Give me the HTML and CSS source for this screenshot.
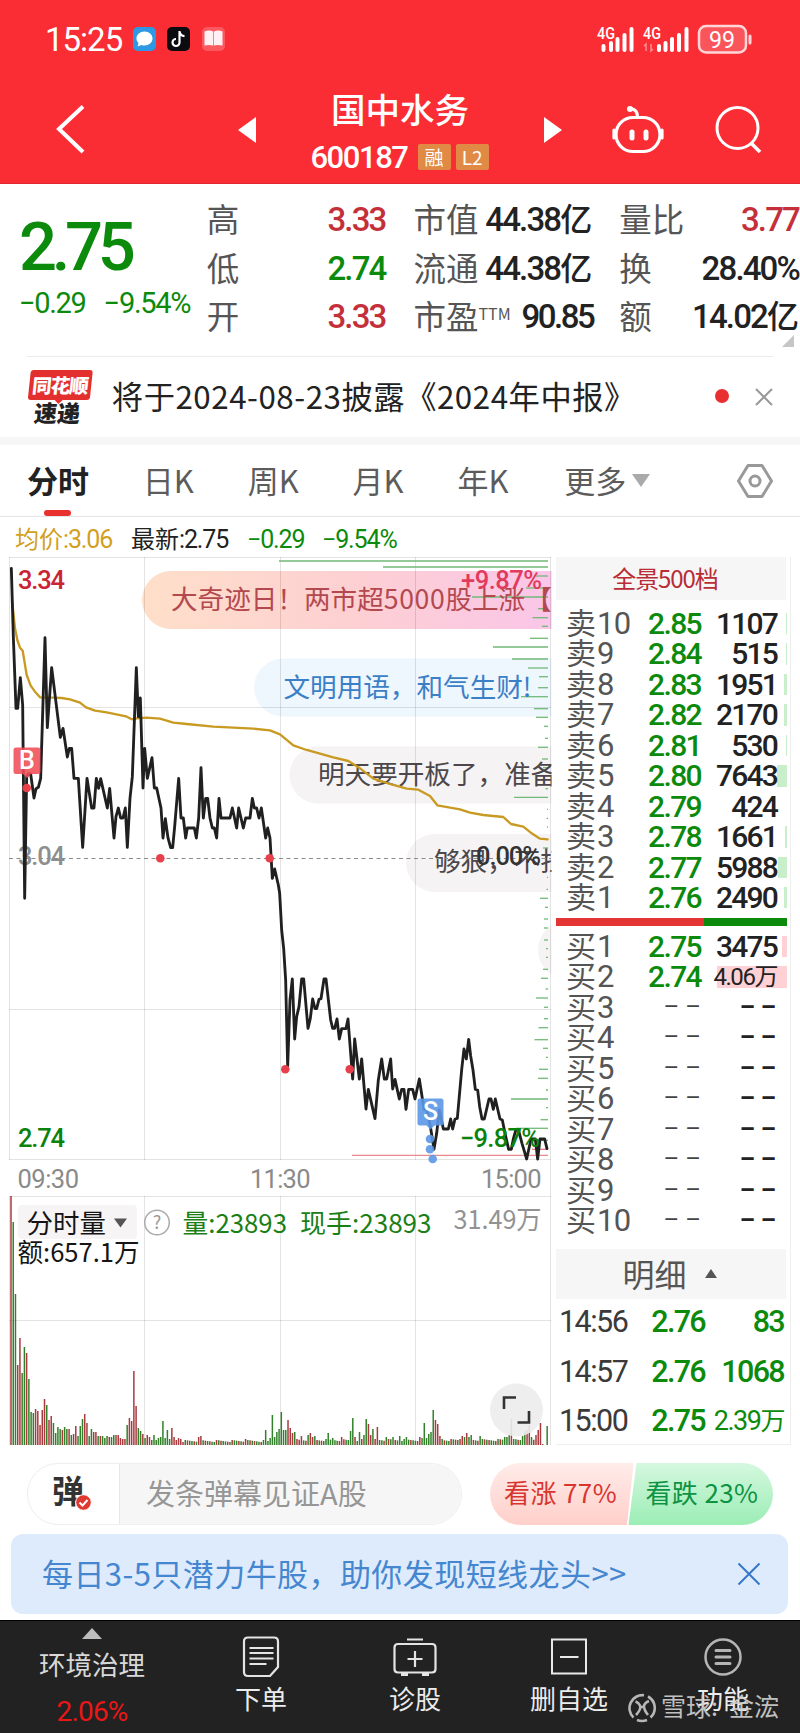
FILE: index.html
```html
<!DOCTYPE html>
<html lang="zh-CN">
<head>
<meta charset="utf-8">
<title>国中水务 600187</title>
<link rel="stylesheet" href="styles.css">
</head>
<body>
<header class="top">
  <div class="status">
    <span class="clock num">15:25</span>
    <svg class="apps" width="94" height="26" viewBox="0 0 94 26">
      <rect x="0" y="1" width="23" height="24" rx="5" fill="#2f98e4"/>
      <path d="M11.500 5.500c4.500 0 8 3 8 7s-3.500 7-8 7c-1 0-2-.1-3-.5L4.500 20.500l1-3.500C4 15.500 3.500 14 3.500 12.500c0-4 3.500-7 8-7z" fill="#fff"/>
      <rect x="34" y="1" width="23" height="24" rx="5" fill="#0b0b10"/>
      <path d="M46.500 5v11.500a3.500 3.500 0 1 1-3.500-3.500M46.500 5.500c.5 3 2.500 4.500 5 4.700" fill="none" stroke="#fff" stroke-width="2.200"/>
      <rect x="69" y="1" width="23" height="24" rx="5" fill="#fb5860"/>
      <path d="M71.500 5.500q4.500-2 8.800 0v14q-4.500-1-8.800 0zM81 5.500q4-2 8.500 0v14q-4.500-1-8.500 0z" fill="#fff0f4"/>
    </svg>
    <svg class="signal" width="158" height="30" viewBox="596 23 158 30">
      <g class="net"><text x="597" y="37.500" textLength="18" lengthAdjust="spacingAndGlyphs">4G</text><text x="643" y="37.500" textLength="18" lengthAdjust="spacingAndGlyphs">4G</text></g>
      <path d="M603.500 45v4M611 42v7M617.500 38v11M624.500 34v15M631.500 28v21M659 45v4M665.500 42v7M672 38v11M679 34v15M686.500 28v21" stroke="#fff" stroke-width="4" stroke-linecap="round"/>
      <path d="M646 50v-7l-2 2M651 43v7l2-2" stroke="#ff8d91" stroke-width="1.500" fill="none"/>
      <rect x="699" y="25" width="47" height="26.500" rx="7" fill="#fb555c" stroke="#ffd6d8" stroke-width="2.500"/>
      <path d="M750 35v7" stroke="#ffd6d8" stroke-width="3" stroke-linecap="round"/>
      <text x="709" y="46.500" class="bat" textLength="26" lengthAdjust="spacingAndGlyphs">99</text>
    </svg>
  </div>
  <div class="titlebar">
    <svg class="back" width="30" height="50" viewBox="0 0 30 50"><path d="M27 2.500L3 25l24 23" fill="none" stroke="#fff" stroke-width="4"/></svg>
    <svg class="prev" width="18" height="26" viewBox="0 0 18 26"><path d="M18 0v26L0 13z" fill="#fff"/></svg>
    <div class="name">
      <h1>国中水务</h1>
      <div class="code"><span class="num">600187</span><b>融</b><b class="l2">L2</b></div>
    </div>
    <svg class="next" width="18" height="26" viewBox="0 0 18 26"><path d="M0 0v26l18-13z" fill="#fff"/></svg>
    <svg class="robot" width="54" height="50" viewBox="0 0 54 50"><g fill="none" stroke="#fff" stroke-width="3.200" stroke-linecap="round"><rect x="5" y="12.500" width="44" height="34" rx="17"/><path d="M3 25v8M51 25v8M26.500 12c0-5-2-8-7-8.500"/><path d="M21 27v6M35 27v6" stroke-width="5"/></g><circle cx="19" cy="4" r="3" fill="#fff"/></svg>
    <svg class="search" width="48" height="48" viewBox="0 0 48 48"><circle cx="22.500" cy="23" r="20.500" fill="none" stroke="#fff" stroke-width="3"/><path d="M36 38l9 9" stroke="#fff" stroke-width="3.500"/></svg>
  </div>
</header>

<section class="quote">
  <div class="last green">
    <div class="price num">2.75</div>
    <div class="chg num"><span>−0.29</span><span>−9.54%</span></div>
  </div>
  <dl class="c1"><dt>高</dt><dd class="red">3.33</dd><dt>低</dt><dd class="green">2.74</dd><dt>开</dt><dd class="red">3.33</dd></dl>
  <dl class="c2"><dt>市值</dt><dd>44.38<i>亿</i></dd><dt>流通</dt><dd>44.38<i>亿</i></dd><dt>市盈<sup>TTM</sup></dt><dd class="pe">90.85</dd></dl>
  <dl class="c3"><dt>量比</dt><dd class="red">3.77</dd><dt>换</dt><dd>28.40%</dd><dt>额</dt><dd>14.02<i>亿</i></dd></dl>
  <span class="corner"></span>
</section>

<section class="news">
  <div class="express"><span class="brand">同花顺</span><span class="sub">速递</span></div>
  <p>将于2024-08-23披露《2024年中报》</p>
  <span class="dot"></span>
  <svg width="18" height="18" viewBox="0 0 18 18"><path d="M1 1l16 16M17 1L1 17" stroke="#999" stroke-width="2"/></svg>
</section>

<nav class="tabs">
  <span class="on">分时</span><span>日K</span><span>周K</span><span>月K</span><span>年K</span><span class="more">更多<i></i></span>
  <svg width="36" height="34" viewBox="0 0 36 34"><path d="M11 1.500h14L34.500 17 25 32.500H11L1.500 17z" fill="none" stroke="#999" stroke-width="3" stroke-linejoin="round"/><circle cx="18" cy="17" r="5" fill="none" stroke="#999" stroke-width="3"/></svg>
</nav>

<div class="legend">
  <span class="avg">均价<em>:3.06</em></span><span class="now">最新<em>:2.75</em></span><span class="green d1"><em>−0.29</em></span><span class="green"><em>−9.54%</em></span>
</div>

<main class="board">
  <svg class="chart" width="556" height="888" viewBox="0 557 556 888">
    <defs>
      <linearGradient id="warm"><stop offset="0" stop-color="#ffdfc9"/><stop offset=".45" stop-color="#fdd0d2"/><stop offset="1" stop-color="#fac3ee"/></linearGradient>
      <clipPath id="frame"><rect x="9" y="557" width="542.500" height="603"/></clipPath>
    </defs>
    <g clip-path="url(#frame)">
      <rect x="142" y="571" width="460" height="58" rx="29" fill="url(#warm)"/>
      <rect x="254" y="658.500" width="340" height="58" rx="29" fill="#eef6fe"/>
      <rect x="289.500" y="746.500" width="400" height="57" rx="28.500" fill="#f6f3f5"/>
      <rect x="406" y="834" width="400" height="58" rx="29" fill="#f6f3f5"/>
      <rect x="538" y="921" width="400" height="58" rx="29" fill="#f6f3f5"/>
    </g>
    <path d="M9.500 557v603M144.500 557v603M280.500 557v603M415.500 557v603M550.500 557v888M9 557.500h542M9 707.500h542M9 1009.500h542M9 1159.500h542M9 1196.500h542M9.500 1196v249M144.500 1196v249M280.500 1196v249M415.500 1196v249M9 1320.500h542" stroke="#000" stroke-opacity=".11" fill="none"/>
    <g id="depth" stroke-width="1.300"></g>
    <g clip-path="url(#frame)" class="danmu">
      <text x="171" y="609" fill="#b3494f">大奇迹日！两市超<tspan textLength="61">5000</tspan>股上涨【</text>
      <text x="283.500" y="697" fill="#3b7fc6">文明用语，和气生财!</text>
      <text x="318" y="784" fill="#4b474a">明天要开板了，准备</text>
      <text x="434" y="871" fill="#4b474a">够狠，不扛</text>
    </g>
    <path d="M9 858.500h542" stroke="#8b8b8b" stroke-width="1.200" stroke-dasharray="4 3.500"/>
    <g class="axis">
      <text x="18" y="588.500" textLength="47" fill="#cb2434">3.34</text>
      <text x="461" y="588.500" textLength="81" fill="#e23a5c">+9.87%</text>
      <text x="18" y="865" textLength="47" fill="#8e8e8e">3.04</text>
      <text x="476" y="865" textLength="65" fill="#333">0.00%</text>
    </g>
    <g transform="translate(0 550) scale(.33333)" fill="none" stroke-linejoin="round" stroke-linecap="round">
      <path stroke="#c99a22" stroke-width="7" d="M36 150L45 235 52 270 60 293 68 302 80 375 92 407 105 425 120 442 160 443 185 444 210 448 240 458 258 472 285 482 320 487 378 499 395 508 410 505 440 503 480 506 520 518 560 522 640 530 700 533 760 536 810 541 840 553 880 586 920 600 960 611 1000 622 1045 633 1080 655 1120 686 1180 705 1220 716 1255 719 1290 738 1312 766 1380 778 1410 788 1450 795 1510 801 1533 822 1570 830 1595 850 1620 866 1643 868"/>
      <path stroke="#202020" stroke-width="8.500" d="M34 55L40 260 48 475 53 475 61 383 68 465 74 1045 80 680 85 672 92 672 102 744 108 716 115 712 122 685 135 263 142 533 155 353 181 562 189 535 202 621 208 595 215 595 222 685 235 685 248 892 261 685 275 774 282 774 289 685 296 715 302 686 322 774 329 715 342 864 348 800 355 774 362 804 369 804 376 774 382 892 390 745 397 680 409 353 415 500 421 444 429 714 434 595 442 685 456 623 463 714 470 714 483 774 489 864 496 806 504 864 512 893 518 893 524 830 536 685 543 804 550 804 557 864 562 834 583 834 589 864 596 804 603 653 610 804 617 745 623 745 630 804 637 834 643 834 650 864 657 745 663 804 690 804 697 774 710 834 716 774 730 834 737 804 750 804 757 745 763 774 770 774 777 804 784 774 797 864 803 834 810 864 817 985 824 957 835 1005 839 1030 845 1140 851 1195 857 1290 863 1550 870 1350 877 1287 884 1467 890 1400 897 1370 905 1287 911 1287 924 1435 931 1405 938 1347 945 1376 950 1376 957 1348 963 1346 972 1287 978 1287 992 1410 998 1435 1004 1435 1011 1407 1018 1467 1025 1436 1038 1436 1044 1407 1058 1587 1064 1467 1078 1587 1085 1527 1098 1677 1105 1618 1125 1706 1135 1590 1145 1527 1153 1587 1160 1587 1172 1527 1178 1617 1185 1588 1198 1647 1205 1618 1212 1618 1218 1678 1226 1618 1238 1618 1245 1647 1258 1587 1272 1678 1280 1678 1292 1735 1302 1798 1310 1750 1318 1680 1330 1737 1345 1737 1352 1707 1358 1737 1365 1707 1372 1705 1385 1560 1392 1497 1399 1527 1406 1468 1412 1518 1419 1560 1426 1618 1433 1620 1439 1670 1446 1707 1453 1707 1467 1647 1473 1647 1480 1678 1486 1647 1500 1707 1507 1710 1515 1750 1526 1798 1534 1798 1540 1767 1548 1738 1555 1738 1566 1780 1580 1827 1593 1767 1606 1767 1613 1827 1620 1767 1634 1767 1641 1796"/>
    </g>
    <g fill="#e8404a"><circle cx="26.700" cy="788" r="4.300"/><circle cx="160.300" cy="858.300" r="4.300"/><circle cx="269.700" cy="858.300" r="4.300"/><circle cx="285.300" cy="1069.300" r="4.300"/><circle cx="349.700" cy="1069.300" r="4.300"/></g>
    <path fill="#f04d58" fill-opacity=".88" d="M16 747.500h22q2.500 0 2.500 2.500v21.500q0 2.500-2.500 2.500h-7l-4 4-4-4h-7q-2.500 0-2.500-2.500V750q0-2.500 2.500-2.500z"/>
    <g fill="#5a97e6" fill-opacity=".9"><path d="M420 1098.500h21q2.500 0 2.500 2.500v22q0 2.500-2.500 2.500h-6.500l-4 4-4-4H420q-2.500 0-2.500-2.500v-22q0-2.500 2.500-2.500z"/><circle cx="430" cy="1139" r="4.300"/><circle cx="430" cy="1149.300" r="4.300"/><circle cx="432.700" cy="1159" r="4.300"/></g>
    <g class="mark"><text x="27" y="768.500">B</text><text x="430.500" y="1119.500">S</text></g>
    <g class="axis">
      <text x="18" y="1147" textLength="47" fill="#0b820b">2.74</text>
      <text x="460" y="1147" textLength="80" fill="#0b820b">−9.87%</text>
      <g class="thin" fill="#8a8a8a"><text x="17.500" y="1188" textLength="61.500">09:30</text><text x="250" y="1188" textLength="60.500">11:30</text><text x="481" y="1188" textLength="60.500">15:00</text></g>
    </g>
    <g id="volume" stroke-width="1.500"></g>
    <rect x="18" y="1205" width="119" height="34" rx="4" fill="#f6f4f5"/>
    <path d="M114 1218.500h13l-6.500 9z" fill="#555"/>
    <circle cx="157" cy="1222.500" r="12.300" fill="none" stroke="#aaa" stroke-width="1.500"/>
    <g class="vol">
      <text x="26.500" y="1232.500" fill="#151515" textLength="79.500" lengthAdjust="spacingAndGlyphs">分时量</text>
      <text x="157" y="1229" class="q" fill="#999">?</text>
      <text x="182.500" y="1232.500" fill="#1a8015" textLength="104.500" lengthAdjust="spacingAndGlyphs">量:23893</text>
      <text x="300" y="1232.500" fill="#1a8015" textLength="131.500" lengthAdjust="spacingAndGlyphs">现手:23893</text>
      <text x="453.500" y="1228.500" fill="#929292" textLength="88" lengthAdjust="spacingAndGlyphs">31.49万</text>
      <text x="17.500" y="1261.500" fill="#151515" textLength="122" lengthAdjust="spacingAndGlyphs">额:657.1万</text>
    </g>
    <circle cx="516.500" cy="1410" r="26.500" fill="#ececec" fill-opacity=".9"/>
    <path d="M504 1409v-11.500h12M517.500 1422.500h11.500V1411" fill="none" stroke="#333" stroke-width="2.600"/>
  </svg>

  <aside class="book">
    <div class="all">全景500档</div>
    <div class="rows" id="asks"></div>
    <div class="ratio"><i></i></div>
    <div class="rows" id="bids"></div>
    <div class="detail">明细<i></i></div>
    <div class="ticks num">
      <span>14:56</span><b>2.76</b><b>83</b>
      <span>14:57</span><b>2.76</b><b>1068</b>
      <span>15:00</span><b>2.75</b><b class="wan">2.39<i>万</i></b>
    </div>
  </aside>
</main>

<section class="comment">
  <div class="input">
    <div class="dan">弹<svg width="17" height="17" viewBox="0 0 17 17"><circle cx="8.500" cy="8.500" r="7.800" fill="#e0392f" stroke="#fff"/><path d="M4.500 8.500l3 3 5-5.500" fill="none" stroke="#fff" stroke-width="2"/></svg></div>
    <div class="hint">发条弹幕见证A股</div>
  </div>
  <div class="vote"><span class="up">看涨 77%</span><span class="down">看跌 23%</span></div>
</section>

<section class="banner"><p>每日3-5只潜力牛股，助你发现短线龙头&gt;&gt;</p>
  <svg width="24" height="24" viewBox="0 0 24 24"><path d="M1.500 1.500l21 21M22.500 1.500l-21 21" stroke="#3578c8" stroke-width="2"/></svg></section>

<footer class="bar">
  <div class="sector"><i></i><span>环境治理</span><b>2.06%</b></div>
  <div><svg width="38" height="42" viewBox="0 0 38 42"><path d="M6 1.500h26q4 0 4 4V31L28 40H6q-4 0-4-4V5.500q0-4 4-4zM7.500 12h24M7.500 17h24M7.500 22.500h24M7.500 28h17" fill="none" stroke="#e4e4e4" stroke-width="2.200"/></svg><span>下单</span></div>
  <div><svg width="44" height="42" viewBox="0 0 44 42"><path d="M5 8h34q3.500 0 3.500 3.500V33q0 3.500-3.500 3.500H5Q1.500 36.500 1.500 33V11.500Q1.500 8 5 8zM14 3.500h16M22 15v16M14.500 23h15" fill="none" stroke="#e4e4e4" stroke-width="2.200"/><path d="M8 38.500h7M29 38.500h7" stroke="#e4e4e4" stroke-width="3"/></svg><span>诊股</span></div>
  <div><svg width="38" height="42" viewBox="0 0 38 42"><path d="M2 3.500h34v34H2zM10 21h18.500" fill="none" stroke="#e8e8e8" stroke-width="2"/></svg><span>删自选</span></div>
  <div><svg width="40" height="42" viewBox="0 0 40 42"><circle cx="20" cy="21" r="17.500" fill="none" stroke="#b5b5b5" stroke-width="2.500"/><path d="M13 14.500h14M13 21h14M13 27.500h14" stroke="#b5b5b5" stroke-width="3" stroke-linecap="round"/></svg><span>功能</span></div>
  <div class="watermark"><svg width="30" height="30" viewBox="0 0 30 30"><g fill="none" stroke="#c8c8c8" stroke-width="2.600"><path d="M17 2.200A13 13 0 0 0 6.500 24.500M21 3.500A13 13 0 0 1 23.500 24.500M10 27a13 13 0 0 0 10 0M8.500 8.500q3 1 4.500 4 1.500 3.500-4 9.500M22 8q-4 1.500-5 4.500-.5 4 4 9.500M13 14h4"/></g></svg><span>雪球:</span><span>金浤</span></div>
</footer>
<script src="script.js"></script>
</body>
</html>
```

FILE: styles.css
```css
* { box-sizing: border-box; }
body { margin: 0; width: 800px; height: 1733px; overflow: hidden; background: #fff; color: #222; font-family: "Noto Sans CJK SC", sans-serif; display: flex; flex-direction: column; }
h1, p, dl, dd { margin: 0; }
i, em { font-style: normal; }
svg { display: block; flex: none; }
.num, dd, em { font-family: Roboto, "Noto Sans CJK SC", sans-serif; font-weight: 500; letter-spacing: -.055em; }
.green { color: #0b8a0b !important; }
.red { color: #c4303a !important; }

.top { height: 184px; background: #fa2d35; color: #fff; border-bottom: 1px solid #e0262e; flex: none; }
.status { height: 78px; padding: 0 0 0 45px; display: flex; align-items: center; }
.clock { font-size: 33px; width: 88px; font-weight: 400; letter-spacing: -.03em; }
.signal { margin-left: 369px; }
.signal text { font-family: Roboto, sans-serif; fill: #fff; font-size: 16px; font-weight: 500; }
.signal .bat { font-size: 24px; font-weight: 400; }
.titlebar { display: flex; height: 105px; }
.back { margin: 26px 0 0 56px; }
.prev { margin: 39px 0 0 152px; }
.name { width: 288px; display: flex; flex-direction: column; align-items: center; }
h1 { font-size: 34.500px; line-height: 40px; font-weight: 500; margin: 10px 0 0; }
.code { display: flex; align-items: center; gap: 5px; margin-top: 12px; height: 36px; font-size: 31px; line-height: 36px; }
.code .num { letter-spacing: -.046em; margin: 0 5px 0 -1px; }
.code b { background: #e18a45; width: 33px; height: 26px; font-size: 19px; line-height: 25px; text-align: center; font-weight: 400; border-radius: 2px; margin-top: -3px; }
.next { margin-top: 39px; }
.robot { margin: 27px 0 0 49px; }
.search { margin: 27px 0 0 50px; }

.quote { height: 172px; display: flex; position: relative; flex: none; }
.last { width: 207px; padding: 23px 0 0 19px; }
.price { font-size: 67px; line-height: 80px; letter-spacing: -.08em; }
.chg { font-size: 29px; line-height: 34px; margin-top: -1px; display: flex; gap: 18px; font-weight: 400; letter-spacing: -.045em; }
.quote dl { display: grid; grid-template-columns: 64px 1fr; grid-template-rows: repeat(3, 48.500px); padding-top: 11px; line-height: 48px; }
.quote dt { font-size: 32.500px; color: #555; white-space: nowrap; font-weight: 400; position: relative; top: -1px; }
.quote dd { font-size: 33px; text-align: right; white-space: nowrap; letter-spacing: -.056em; justify-self: end; padding: 1px 1px 0 0; }
.quote .pe { letter-spacing: -.075em; padding-right: 0; }
.quote dd i { letter-spacing: 0; font-size: 32px; font-weight: 500; }
.c1 { width: 180px; }
.c2 { width: 180px; margin-left: 27px; }
.c3 { width: 181px; margin-left: 26px; }
sup { font-size: 16px; line-height: 0; vertical-align: 9px; }
.corner { position: absolute; right: 6px; bottom: 9px; border: 6px solid; border-color: transparent #c6c6c6 #c6c6c6 transparent; }

.news { height: 81px; margin: 0 27px; border-top: 1px solid #ececec; display: flex; align-items: center; flex: none; }
.express { width: 64px; margin: 0 21px 0 0; display: flex; flex-direction: column; align-items: center; font-weight: 900; transform: skewX(-6deg); }
.brand { background: #e3302f; color: #fff; width: 62px; height: 30px; line-height: 29px; font-size: 19.500px; text-align: center; border-radius: 3px; letter-spacing: -1px; position: relative; }
.brand::after { content: ""; position: absolute; left: 26px; top: 29px; border: 5px solid transparent; border-top-color: #e3302f; border-bottom: 0; }
.sub { font-size: 23px; line-height: 25px; }
.news p { font-size: 31.300px; width: 604px; white-space: nowrap; margin-top: -3px; letter-spacing: .017em; }
.dot { width: 14px; height: 14px; border-radius: 50%; background: #e93030; margin: -2px 26px 0 1px; }

.tabs { height: 80px; border-top: 8px solid #f6f6f6; border-bottom: 1px solid #e6e6e6; display: flex; align-items: center; padding: 0 27px; font-size: 31px; font-weight: 400; color: #5c5c5c; position: relative; flex: none; }
.tabs span { width: 105px; margin-top: -3px; }
.tabs .on { width: 116px; font-weight: 700; color: #222; }
.tabs .on::after { content: ""; position: absolute; left: 44px; bottom: 0; width: 27px; height: 6px; border-radius: 3px; background: #e8302f; }
.tabs .more { display: flex; align-items: center; width: 173px; gap: 6px; margin-left: 2px; }
.more i { border: 9px solid transparent; border-top: 13px solid #aaa; border-bottom: 0; margin-top: 2px; }

.legend { height: 40px; display: flex; align-items: center; padding: 1px 0 0 15px; font-size: 24px; flex: none; }
.legend span { white-space: nowrap; }
.legend em { font-size: 25px; font-weight: 400; letter-spacing: -.045em; }
.avg { color: #d2a01e; width: 116px; }
.now { width: 116px; }
.d1 { width: 75px; }

.board { height: 888px; display: flex; flex: none; }
.axis text { font-family: Roboto, sans-serif; font-size: 25.500px; font-weight: 500; }
.axis .thin text { font-weight: 400; }
.danmu text { font-size: 26.600px; }
.mark text { fill: #fff; font: 500 25px Roboto, sans-serif; text-anchor: middle; }
.vol text { font-size: 26px; }
.vol .q { font-size: 18px; text-anchor: middle; }

.book { width: 235px; border-right: 1px solid #eee; border-bottom: 1px solid #eee; padding-right: 4px; }
.all { height: 43px; background: #f6f6f6; color: #b92b35; font-size: 24px; letter-spacing: -.045em; line-height: 41px; text-align: center; padding-right: 12px; }
.rows { padding-top: 8px; height: 318px; }
.row { display: grid; grid-template-columns: 75px 71px 75px 10px; height: 30.450px; line-height: 30.450px; position: relative; text-align: right; margin-right: -1px; }
.row > * { position: relative; white-space: nowrap; }
.row .lv { text-align: left; padding-left: 10px; font-size: 30px; font-weight: 400; color: #555; top: -2px; }
.row .lv em { font-size: 31px; font-weight: 400; letter-spacing: -.02em; margin-left: 1px; }
.row .num { font-size: 30px; letter-spacing: -.055em; top: 1px; left: -1px; }
.row .num:nth-child(4) { letter-spacing: -.06em; left: 0; }
.row .none { font-weight: 400; font-size: 24px; color: #444; letter-spacing: 0 !important; top: 0; }
.row .none:nth-child(4) { font-weight: 700; color: #222; left: -1px; }
.row .wan { font-size: 24px; font-weight: 400; letter-spacing: -.06em !important; }
.row .bar-fill { position: absolute; right: 0; top: 5px; bottom: 4px; background: #c8efc9; }
#bids .bar-fill { background: #ffd0d4; }
.ratio { height: 8px; background: #0b8a0b; margin-right: -1px; }
.ratio i { display: block; height: 8px; width: 148px; background: #e53434; }
#bids { padding-top: 5px; height: 323px; }
.detail { height: 50px; background: #f6f6f6; display: flex; align-items: center; justify-content: center; gap: 18px; font-size: 32px; line-height: 46px; font-weight: 400; color: #555; padding: 0 3px 3px 0; }
.detail i { border: 6px solid transparent; border-bottom: 9px solid #555; border-top: 0; margin-top: 2px; }
.ticks { display: grid; grid-template-columns: 71px 75px 79px; grid-auto-rows: 49.500px; line-height: 46px; font-size: 30.500px; padding-left: 3px; text-align: right; color: #3a3a3a; height: 145px; }
.ticks span { text-align: left; font-weight: 400; letter-spacing: -.05em; }
.ticks b { font-weight: 500; color: #0b8a0b; letter-spacing: -.055em; }
.ticks .wan { font-size: 27px; font-weight: 400; white-space: nowrap; margin-left: -10px; }
.ticks .wan i { font-size: 25px; }

.comment { height: 89px; padding: 18px 27px 0; display: flex; justify-content: space-between; flex: none; }
.input { width: 435px; height: 62px; border: 1px solid #eee; border-radius: 31px; display: flex; overflow: hidden; }
.dan { width: 92px; border-right: 1px solid #e8e8e8; font-size: 32px; line-height: 50px; font-weight: 700; padding-left: 24px; color: #333; position: relative; }
.dan svg { position: absolute; left: 47px; top: 30px; }
.hint { flex: 1; background: #f6f6f6; color: #969696; font-size: 29px; line-height: 57px; padding-left: 26px; font-weight: 400; }
.vote { display: flex; width: 283px; height: 62px; border-radius: 31px; overflow: hidden; font-size: 26px; line-height: 57px; }
.vote span { white-space: nowrap; letter-spacing: .015em; }
.up { width: 145px; padding-left: 14px; background: linear-gradient(#ffece9, #ffcfca); color: #d9352f; clip-path: polygon(0 0, 100% 0, 137px 100%, 0 100%); }
.down { width: 146px; margin-left: -5px; padding-left: 17px; background: linear-gradient(#d5f8df, #9bedb5); color: #0c9343; clip-path: polygon(8px 0, 100% 0, 100% 100%, 0 100%); }

.banner { height: 80px; margin: 0 12px 0 11px; border-radius: 12px; background: #deebfc; color: #4486cf; display: flex; align-items: center; justify-content: space-between; padding: 0 27px 0 31px; font-size: 31px; flex: none; }
.banner p { margin-top: -3px; white-space: nowrap; letter-spacing: .014em; }

.bar { height: 114px; margin-top: 6px; background: #222; border-top: 1px solid #000; color: #ececec; display: grid; grid-template-columns: 184px repeat(4, 154px); font-size: 26px; position: relative; flex: none; }
.bar > div { display: flex; flex-direction: column; align-items: center; padding-top: 15px; }
.bar > div > span { line-height: 36px; margin-top: 2px; }
.bar > .sector { padding-top: 7px; }
.sector i { border: 10px solid transparent; border-bottom: 11px solid #bdbdbd; border-top: 0; }
.bar > .sector span { margin-top: 7px; font-size: 26.500px; color: #d8d8d8; }
.sector b { font-family: Roboto, sans-serif; font-weight: 400; color: #e81717; font-size: 28px; line-height: 36px; margin-top: 12px; letter-spacing: -.03em; }
.bar > .watermark { position: absolute; left: 627px; top: 71px; padding: 0; flex-direction: row; color: #d2d2d2; opacity: .9; font-size: 25px; width: 170px; }
.bar > .watermark span { margin: -5px 0 0 4px; white-space: nowrap; width: 64px; }
```

FILE: script.js
```js
const NS = 'http://www.w3.org/2000/svg';
function line(group, x1, y1, x2, y2, color) {
  const el = document.createElementNS(NS, 'path');
  el.setAttribute('d', `M${x1} ${y1}L${x2} ${y2}`);
  el.setAttribute('stroke', color);
  group.appendChild(el);
}

// Price distribution: vertical offset and bar length.
const depth = document.getElementById('depth');
const levels = [[11,269],[17,165],[26,12],[38,22],[47,76],[58.700,10],[67.700,15.500],[76.300,6],[88.300,18],[97,55],[109,36],[118,20],[126.700,9],[137.700,10],[146.700,27],[158.700,14],[167.300,12],[176.300,4],[188.300,3],[197.300,10],[209,6],[217.700,5],[238.700,2.500],[247.300,34],[259.300,1],[268.300,1.500],[277,1],[298,5],[306.700,3],[327.300,1],[339.300,1.500],[348.300,8],[357.300,3],[369,4],[378,4],[390,4],[398.700,2],[407.300,2],[419.300,5],[428.300,7],[439,2.500],[448,12],[457.300,4],[468.700,4],[477.700,9.500],[489.700,13.500],[498.300,5],[507.300,2],[519.300,9],[528.300,10],[540,2],[549,37],[557.700,2],[569.700,7.500],[578.300,32],[590.300,15]];
levels.forEach(([y, w]) => line(depth, 548 - w, 550 + y, 548, 550 + y, '#71b978'));
line(depth, 532, 1149.300, 548, 1149.300, '#e27b80');
line(depth, 352, 1155.300, 548, 1155.300, '#e98a8e');

// Volume per minute; the letter is the direction of the bar.
const volume = document.getElementById('volume');
const known = 'r249 g223 g151 r80 r107 g72 g98 r92 g66 g33 g32 r36 r34 r20 r35 r46 g40 r25 r29 g22 g12 g18 g16 r15 g18 g16 r16 g10 r11 r19 g9 g19 g26 r31 r22 g9 g16 r13 r13 g9 r9 g9 g7 g9 r8 g8 g10 r10 r10 r7 r6 r6 g20 r27 r24 r74 r39 g17 g14 r11 g7 r10 r8 g5 g10 g5 g7 g8 g24 g7 g15 g6 r17 r8 r5 r7 r6'.split(' ');
const later = {84:'r8',85:'r9',105:'r6',114:'g15',115:'g4',116:'g7',117:'g30',118:'g8',119:'g13',120:'g16',121:'g33',122:'g15',123:'g15',124:'r25',125:'r17',126:'r12',127:'g13',128:'r6',130:'r9',133:'g10',134:'r12',135:'r8',136:'g9',142:'g12',144:'g7',148:'r8',152:'g14',153:'g27',154:'r8',155:'g4',156:'g13',157:'r6',158:'g10',159:'g26',160:'r21',161:'r10',162:'g16',163:'r6',164:'r18',168:'g8',171:'g8',174:'g9',177:'g8',183:'r8',184:'g7',185:'g22',186:'g7',187:'g11',188:'g13',189:'g35',190:'r25',191:'r21',192:'r9',193:'g6',201:'r6',202:'r9',203:'g8',204:'r12',205:'g8',206:'g10',210:'g9',218:'g6',221:'g8',222:'g8',223:'g10',224:'r26',229:'g9',230:'g14',231:'r15',232:'r20',233:'g8',235:'r10',236:'r15',237:'r22',238:'r1',239:'g0',240:'g19'};
for (let i = 0; i <= 240; i++) {
  const base = i < 114 ? 3 : 4;
  const filler = ((i * 7) % 5 < 3 ? 'g' : 'r') + (base + (i * 13 % 7) / 3);
  const item = known[i] || later[i] || filler;
  const x = 11 + i * 2.234;
  line(volume, x, 1445, x, 1445 - Number(item.slice(1)), item[0] === 'r' ? '#a8393e' : '#33802a');
}

function fillRows(id, side, data) {
  document.getElementById(id).innerHTML = data.map(([n, price, vol, w]) => {
    const wan = vol.includes('万') ? ' wan' : '';
    const none = price === '– –' ? ' none' : '';
    return `<div class="row"><i class="bar-fill" style="width:${w}px"></i><span class="lv">${side}<em>${n}</em></span><span class="num${none || ' green'}">${price}</span><span class="num${none}${wan}">${vol}</span></div>`;
  }).join('');
}
fillRows('asks', '卖', [[10,'2.85','1107',1],[9,'2.84','515',1],[8,'2.83','1951',3],[7,'2.82','2170',3],[6,'2.81','530',1],[5,'2.80','7643',10],[4,'2.79','424',0],[3,'2.78','1661',2],[2,'2.77','5988',9],[1,'2.76','2490',3]]);
fillRows('bids', '买', [[1,'2.75','3475',5],[2,'2.74','4.06万',70]].concat([3,4,5,6,7,8,9,10].map(n => [n, '– –', '– –', 0])));
```
